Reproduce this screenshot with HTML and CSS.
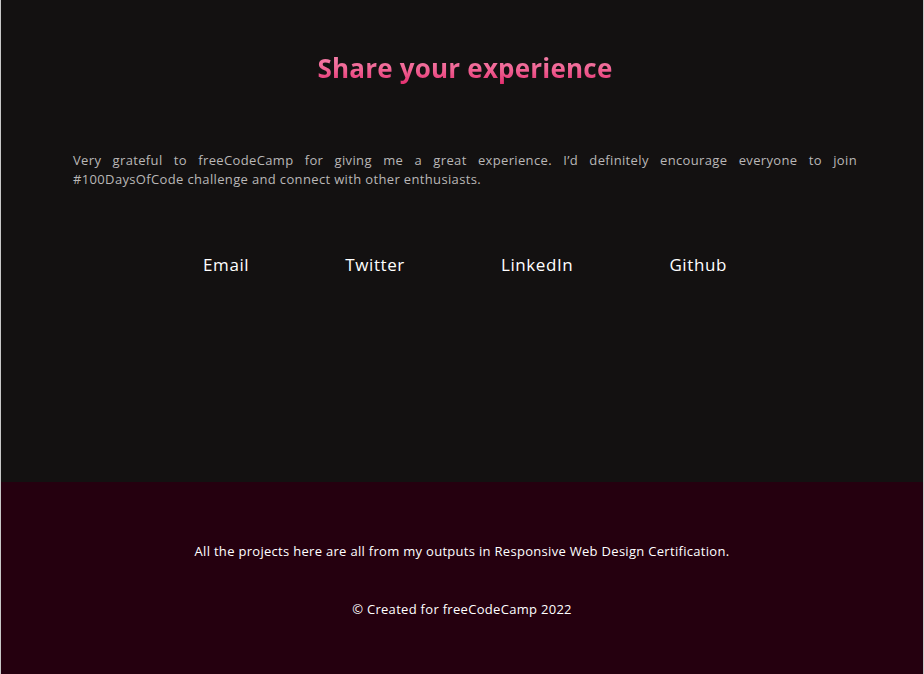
FILE: index.html
```html
<!DOCTYPE html>
<html lang="en">
<head>
<meta charset="utf-8">
<title>Share your experience</title>
<link rel="stylesheet" href="styles.css">
</head>
<body>
<main class="page">
  <section class="share">
    <h2 class="share-title">Share your experience</h2>
    <p class="share-text">Very grateful to freeCodeCamp for giving me a great experience. I’d definitely encourage everyone to join #100DaysOfCode challenge and connect with other enthusiasts.</p>
    <nav class="links">
      <a class="link" href="#">Email</a>
      <a class="link" href="#">Twitter</a>
      <a class="link" href="#">LinkedIn</a>
      <a class="link" href="#">Github</a>
    </nav>
  </section>
  <footer class="footer">
    <p class="footer-line">All the projects here are all from my outputs in Responsive Web Design Certification.</p>
    <p class="footer-line">© Created for freeCodeCamp 2022</p>
  </footer>
</main>
</body>
</html>
```
FILE: styles.css
```css
html, body {
  margin: 0;
  padding: 0;
  height: 100%;
  background: #131111;
}
body {
  font-family: "Open Sans", "Noto Sans", sans-serif;
}
.page {
  min-height: 674px;
  border-left: 1px solid #c8c8c8;
  border-right: 1px solid #c8c8c8;
  box-sizing: border-box;
  display: flex;
  flex-direction: column;
}
.share {
  background: #131111;
  height: 482px;
  box-sizing: border-box;
  padding: 50px 66px 0 72px;
  display: flex;
  flex-direction: column;
  align-items: center;
}
.share-title {
  margin: 0;
  font-size: 26px;
  font-weight: 700;
  line-height: 36px;
  letter-spacing: 0.2px;
  background: linear-gradient(to bottom, #f68cb1 0%, #f06293 55%, #e2286b 100%);
  -webkit-background-clip: text;
  background-clip: text;
  color: transparent;
}
.share-text {
  margin: 65px 0 0 0;
  align-self: stretch;
  font-size: 13px;
  line-height: 19px;
  letter-spacing: 0.35px;
  color: #b9b7b7;
  text-align: justify;
}
.links {
  margin-top: 64px;
  display: flex;
  gap: 96px;
  justify-content: center;
}
.link {
  color: #ffffff;
  text-decoration: none;
  font-size: 17px;
  line-height: 24px;
  letter-spacing: 0.6px;
}
.footer {
  flex: 1;
  background: #25000f;
  display: flex;
  flex-direction: column;
  align-items: center;
  padding-top: 60px;
  gap: 39px;
}
.footer-line {
  margin: 0;
  color: #ffffff;
  font-size: 13px;
  line-height: 19px;
  letter-spacing: 0.3px;
  text-align: center;
}
```
